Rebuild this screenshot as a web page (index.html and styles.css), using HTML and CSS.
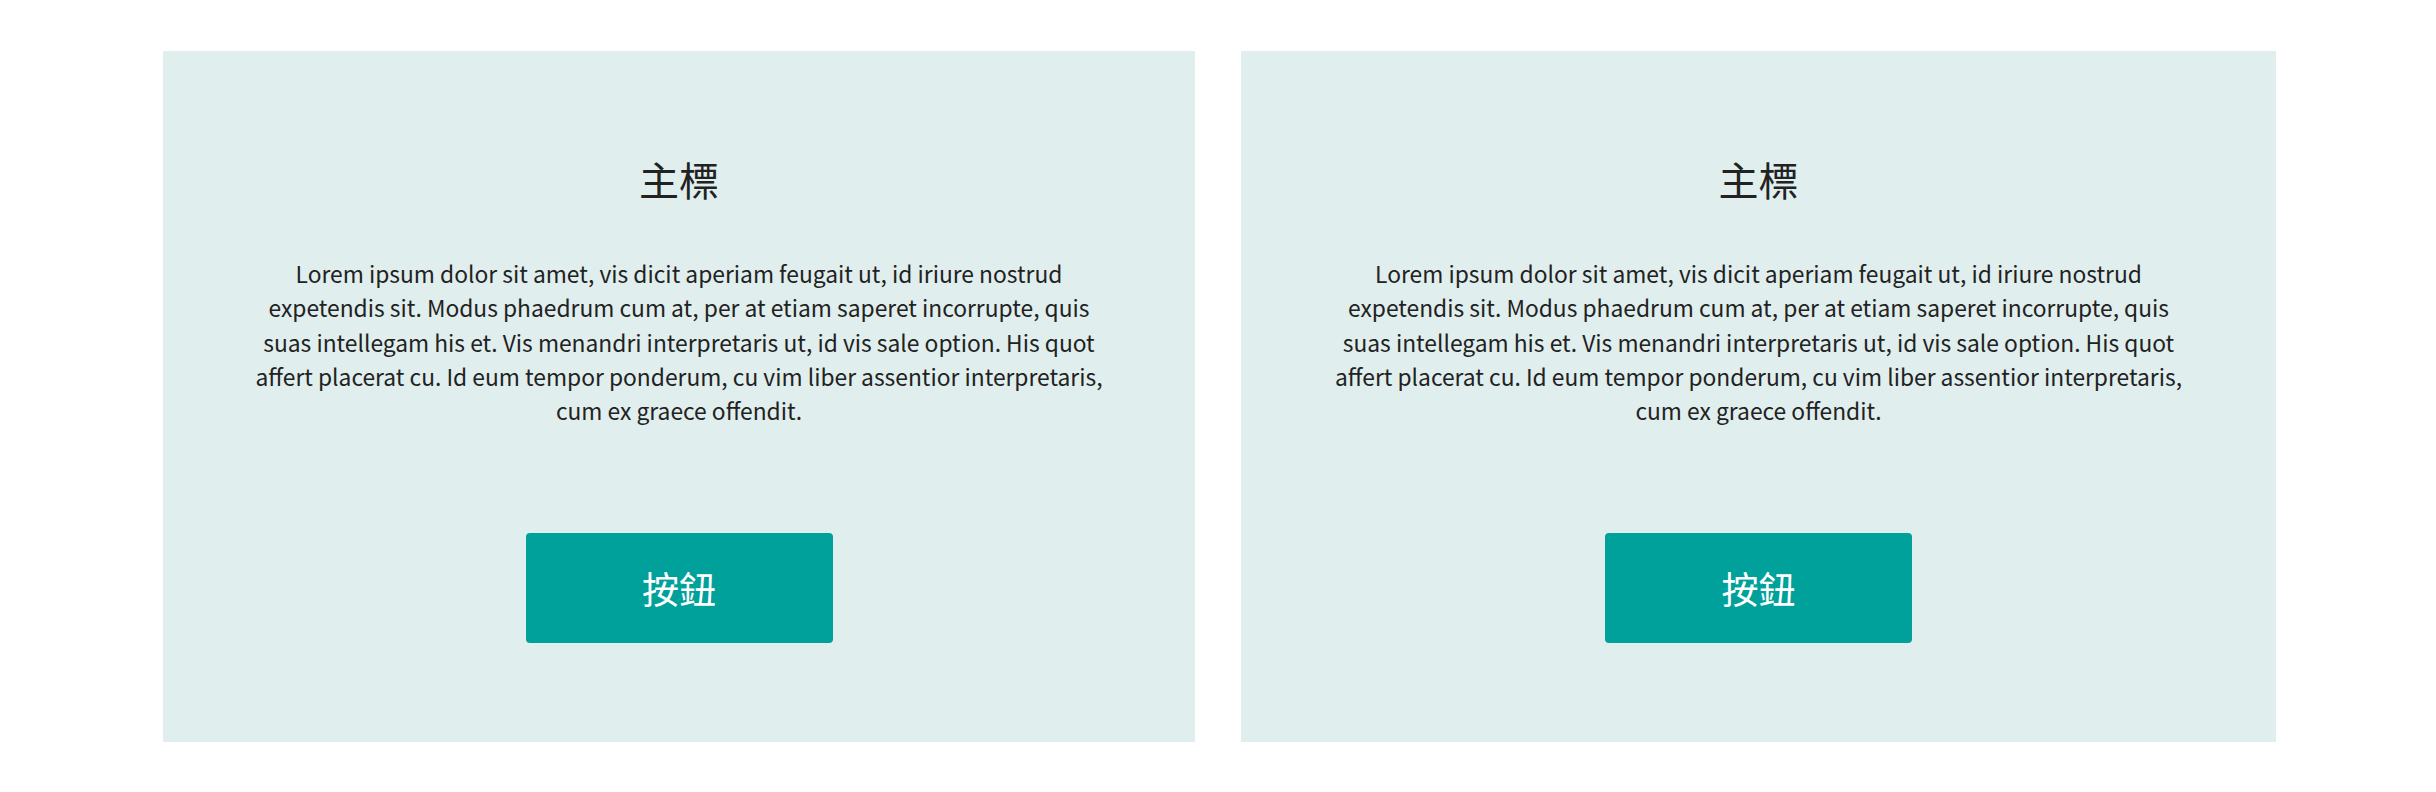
FILE: index.html
```html
<!DOCTYPE html>
<html lang="zh-Hant">
<head>
<meta charset="utf-8">
<title>Cards</title>
<link rel="stylesheet" href="styles.css">
</head>
<body>
<div class="page">
  <section class="card">
    <h2 class="card-title">主標</h2>
    <p class="card-text">Lorem ipsum dolor sit amet, vis dicit aperiam feugait ut, id iriure nostrud expetendis sit. Modus phaedrum cum at, per at etiam saperet incorrupte, quis suas intellegam his et. Vis menandri interpretaris ut, id vis sale option. His quot affert placerat cu. Id eum tempor ponderum, cu vim liber assentior interpretaris, cum ex graece offendit.</p>
    <a class="card-button" href="#">按鈕</a>
  </section>
  <section class="card">
    <h2 class="card-title">主標</h2>
    <p class="card-text">Lorem ipsum dolor sit amet, vis dicit aperiam feugait ut, id iriure nostrud expetendis sit. Modus phaedrum cum at, per at etiam saperet incorrupte, quis suas intellegam his et. Vis menandri interpretaris ut, id vis sale option. His quot affert placerat cu. Id eum tempor ponderum, cu vim liber assentior interpretaris, cum ex graece offendit.</p>
    <a class="card-button" href="#">按鈕</a>
  </section>
</div>
</body>
</html>
```

FILE: styles.css
```css
* { box-sizing: border-box; }
html, body { margin: 0; padding: 0; background: #ffffff; }
body {
  font-family: "Noto Sans CJK TC", "Noto Sans", sans-serif;
  color: #222222;
}
.page {
  display: grid;
  grid-template-columns: 1032px 1035px;
  column-gap: 46px;
  padding: 51px 160px 50px 163px;
}
.card {
  background: #e0eeee;
  display: flex;
  flex-direction: column;
  align-items: center;
  padding: 100px 86px 99px;
}
.card-title {
  margin: 0;
  font-size: 40px;
  line-height: 56px;
  font-weight: 400;
  color: #222222;
}
.card-text {
  margin: 50px 0 0;
  font-size: 22.8px;
  line-height: 34.3px;
  text-align: center;
  color: #222222;
}
.card-button {
  margin-top: 105px;
  width: 307px;
  height: 110px;
  display: flex;
  align-items: center;
  justify-content: center;
  background: #00a19a;
  color: #ffffff;
  font-size: 37px;
  text-decoration: none;
  border-radius: 4px;
}
```
